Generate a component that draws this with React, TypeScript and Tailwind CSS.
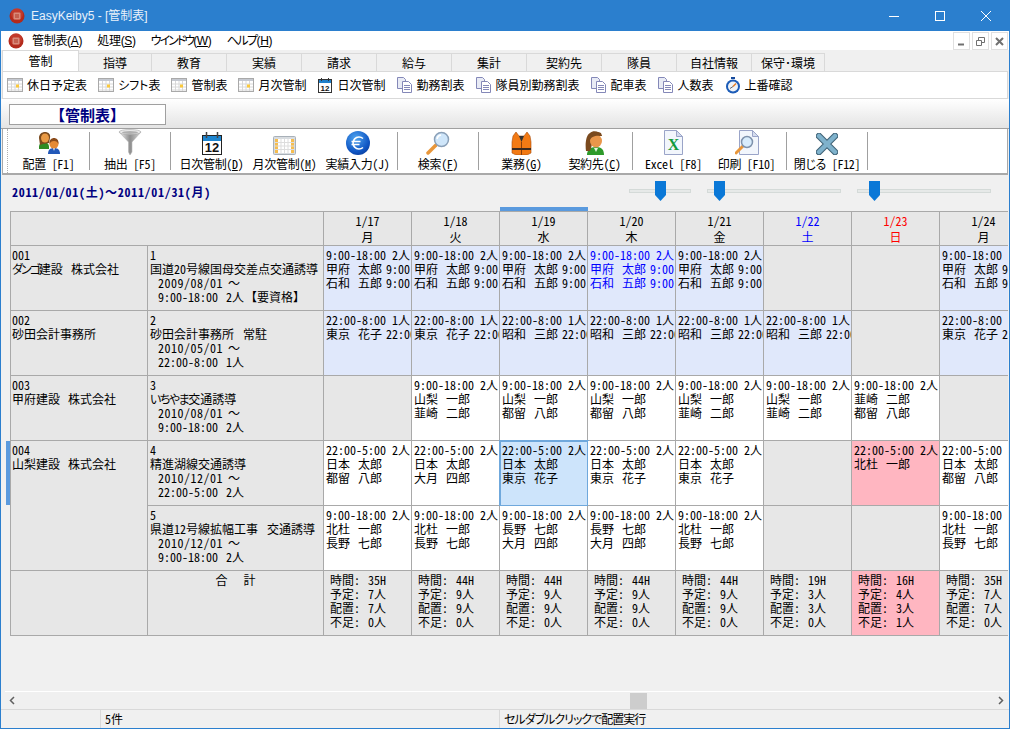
import React from "react";

type Cell = {
  time?: string;
  names?: string[];
  suffix?: string;
  tone?: "blue" | "white" | "pink" | "selected";
  blueText?: boolean;
};

const DATES = [
  { d: "1/17", w: "月" },
  { d: "1/18", w: "火" },
  { d: "1/19", w: "水" },
  { d: "1/20", w: "木" },
  { d: "1/21", w: "金" },
  { d: "1/22", w: "土", color: "text-[#0000ff]" },
  { d: "1/23", w: "日", color: "text-[#ff0000]" },
  { d: "1/24", w: "月" },
];

const day = (names: string[], suffix = "") => ({ time: "9:00-18:00 2人", names, suffix, tone: "white" as const });
const night = (names: string[]) => ({ time: "22:00-5:00 2人", names, tone: "white" as const });
const r1 = { time: "9:00-18:00 2人", names: ["甲府 太郎", "石和 五郎"], suffix: "9:00", tone: "blue" as const };
const r2 = (name: string) => ({ time: "22:00-8:00 1人", names: [name], suffix: "22:00", tone: "blue" as const });

const ROWS: Cell[][] = [
  [r1, r1, r1, { ...r1, blueText: true }, r1, {}, {}, r1],
  [r2("東京 花子"), r2("東京 花子"), r2("昭和 三郎"), r2("昭和 三郎"), r2("昭和 三郎"), r2("昭和 三郎"), {}, r2("東京 花子")],
  [
    {},
    day(["山梨 一郎", "韮崎 二郎"]),
    day(["山梨 一郎", "都留 八郎"]),
    day(["山梨 一郎", "都留 八郎"]),
    day(["山梨 一郎", "韮崎 二郎"]),
    day(["山梨 一郎", "韮崎 二郎"]),
    day(["韮崎 二郎", "都留 八郎"]),
    {},
  ],
  [
    night(["日本 太郎", "都留 八郎"]),
    night(["日本 太郎", "大月 四郎"]),
    { ...night(["日本 太郎", "東京 花子"]), tone: "selected" },
    night(["日本 太郎", "東京 花子"]),
    night(["日本 太郎", "東京 花子"]),
    {},
    { ...night(["北杜 一郎"]), tone: "pink" },
    night(["日本 太郎", "都留 八郎"]),
  ],
  [
    day(["北杜 一郎", "長野 七郎"]),
    day(["北杜 一郎", "長野 七郎"]),
    day(["長野 七郎", "大月 四郎"]),
    day(["長野 七郎", "大月 四郎"]),
    day(["北杜 一郎", "長野 七郎"]),
    {},
    {},
    day(["北杜 一郎", "長野 七郎"]),
  ],
];

const TOTALS = [
  ["35H", "7人", "7人", "0人"],
  ["44H", "9人", "9人", "0人"],
  ["44H", "9人", "9人", "0人"],
  ["44H", "9人", "9人", "0人"],
  ["44H", "9人", "9人", "0人"],
  ["19H", "3人", "3人", "0人"],
  ["16H", "4人", "3人", "1人"],
  ["35H", "7人", "7人", "0人"],
];

const TABS = ["指導", "教育", "実績", "請求", "給与", "集計", "契約先", "隊員", "自社情報", "保守･環境"];

// kana runs are narrower in the original UI font
function Kana({ children, className = "" }: { children: React.ReactNode; className?: string }) {
  return <span className={`[font-feature-settings:'palt'] ${className}`}>{children}</span>;
}

function AppIcon() {
  return (
    <svg width="16" height="16" viewBox="0 0 16 16">
      <circle cx="8" cy="8" r="7.5" fill="#b32a1c" />
      <circle cx="8" cy="6" r="6" fill="#d24a3a" opacity="0.5" />
      <rect x="4.5" y="4.5" width="7" height="7" rx="1" fill="#d98a7a" />
      <rect x="6" y="6" width="4" height="4" fill="#c4604f" />
    </svg>
  );
}

function GridIcon() {
  return (
    <svg width="16" height="14" viewBox="0 0 16 14">
      <rect x="0.5" y="0.5" width="15" height="13" fill="#fff" stroke="#a9a9a9" />
      <rect x="1" y="1" width="14" height="2" fill="#c4c8d0" />
      <path d="M1 6h14M1 9h14M1 12h14M4.5 3v10M8 3v10M11.5 3v10" stroke="#d8d8d8" />
      <rect x="9" y="6.5" width="3" height="3" fill="#fbc93a" />
    </svg>
  );
}

function SmallCalendar() {
  return (
    <svg width="14" height="16" viewBox="0 0 14 16">
      <rect x="0.5" y="2.5" width="13" height="13" fill="#fff" stroke="#333" />
      <rect x="1" y="3" width="12" height="3" fill="#1f7fc9" />
      <path d="M3.5 1v3M10.5 1v3" stroke="#333" />
      <text x="7" y="14" fontSize="8" fontWeight="700" textAnchor="middle" fill="#111" fontFamily="Liberation Sans">12</text>
    </svg>
  );
}

function DocsIcon() {
  return (
    <svg width="15" height="16" viewBox="0 0 15 16">
      <path d="M0.5 0.5h6l2 2v9h-8z" fill="#e8ebf5" stroke="#8488b8" />
      <path d="M5.5 4.5h6l3 3v8h-9z" fill="#fff" stroke="#8488b8" />
      <path d="M7 8.5h6M7 10.5h6M7 12.5h6" stroke="#8488b8" />
    </svg>
  );
}

function WatchIcon() {
  return (
    <svg width="16" height="17" viewBox="0 0 16 17">
      <rect x="6" y="0" width="4" height="2" fill="#164a9c" />
      <circle cx="8" cy="9.5" r="7" fill="#1c5cb8" />
      <circle cx="8" cy="9.5" r="5" fill="#eef2f6" />
      <path d="M8 9.5l3-3" stroke="#e57a20" strokeWidth="1.4" />
      <path d="M8 9.5l-3 2" stroke="#666" />
    </svg>
  );
}

function PeopleIcon() {
  return (
    <svg width="24" height="24" viewBox="0 0 24 24">
      <path d="M2 16c0-3 2-5 5-5s5 2 5 5v2H2z" fill="#2e8b24" />
      <path d="M2 7c0-4 3-6 6-6s6 2 5 6l-1 5-6 1-3 1z" fill="#7a4a1e" />
      <ellipse cx="8" cy="7" rx="4" ry="4.5" fill="#e99a45" />
      <path d="M11 23c0-4 2-6 6-6s6 2 6 6z" fill="#2258b8" />
      <path d="M16 17l1 3 1-3z" fill="#fff" />
      <circle cx="17" cy="13" r="4.5" fill="#e58a35" />
      <path d="M12.5 13c-.5-4 2-6 4.5-6s5 2 4.5 6c-1-2-2-3-4.5-3s-3.5 1-4.5 3z" fill="#8a4a1a" />
    </svg>
  );
}

function FunnelIcon() {
  return (
    <svg width="24" height="26" viewBox="0 0 24 26">
      <defs>
        <linearGradient id="fn" x1="0" x2="1">
          <stop offset="0" stopColor="#f4f4f4" />
          <stop offset="0.5" stopColor="#8f8f8f" />
          <stop offset="1" stopColor="#d8d8d8" />
        </linearGradient>
      </defs>
      <path d="M1 3h22l-9 10v10l-2 3-1.500-3V13z" fill="url(#fn)" stroke="#aaa" strokeWidth="0.5" />
      <ellipse cx="12" cy="3" rx="11" ry="2.500" fill="#e9e9e9" stroke="#999" strokeWidth="0.5" />
      <ellipse cx="12" cy="3.500" rx="8" ry="1.500" fill="#b0b0b0" />
    </svg>
  );
}

function BigCalendar() {
  return (
    <svg width="20" height="23" viewBox="0 0 20 23">
      <rect x="0.5" y="3.5" width="19" height="19" fill="#fff" stroke="#222" />
      <rect x="1" y="4" width="18" height="5" fill="#1d85cf" />
      <path d="M4.5 0v6M15.5 0v6" stroke="#444" strokeWidth="1.5" />
      <text x="10" y="20" fontSize="13" fontWeight="700" textAnchor="middle" fill="#111" fontFamily="Liberation Sans">12</text>
    </svg>
  );
}

function MonthIcon() {
  return (
    <svg width="23" height="19" viewBox="0 0 23 19">
      <rect x="0.5" y="0.5" width="22" height="18" rx="1" fill="#d8dce0" stroke="#a8b0b8" />
      <rect x="2" y="3" width="19" height="14" fill="#fff" />
      <rect x="2" y="3" width="3" height="14" fill="#f6bd4f" />
      <rect x="18" y="3" width="3" height="14" fill="#f6bd4f" />
      <path d="M2 6.500h19M2 10h19M2 13.500h19M8 3v14M11.500 3v14M15 3v14" stroke="#ddd" />
    </svg>
  );
}

function EuroIcon() {
  return (
    <svg width="24" height="24" viewBox="0 0 24 24">
      <defs>
        <radialGradient id="eu" cx="0.4" cy="0.3" r="0.8">
          <stop offset="0" stopColor="#4fa4ef" />
          <stop offset="0.7" stopColor="#0f56c4" />
          <stop offset="1" stopColor="#0a3a96" />
        </radialGradient>
      </defs>
      <circle cx="12" cy="12" r="12" fill="url(#eu)" />
      <path d="M17 7.500a6 6 0 1 0 0 9M5.500 10.500h9M5.500 13.500h8" fill="none" stroke="#fff" strokeWidth="1.6" />
    </svg>
  );
}

function LensIcon() {
  return (
    <svg width="24" height="24" viewBox="0 0 24 24">
      <path d="M10 14L2 22" stroke="#e8963a" strokeWidth="3.5" strokeLinecap="round" />
      <circle cx="15.5" cy="8.500" r="7" fill="#cfe6fa" stroke="#8aa0b8" strokeWidth="1.5" />
      <path d="M11 8a5 5 0 0 1 4-4" stroke="#fff" strokeWidth="1.5" fill="none" />
    </svg>
  );
}

function VestIcon() {
  return (
    <svg width="21" height="23" viewBox="0 0 21 23">
      <path d="M5 0l3 4h5l3-4 3 4 1 6v11l-4 2H5l-4-2V10l1-6z" fill="#f27a14" stroke="#a64a0a" strokeWidth="0.6" />
      <path d="M8 4l2.500 6L13 4z" fill="#333" />
      <path d="M10.500 10v13" stroke="#8a3f08" />
      <rect x="1" y="16" width="19" height="2" fill="#3a2a20" />
    </svg>
  );
}

function WomanIcon() {
  return (
    <svg width="20" height="24" viewBox="0 0 20 24">
      <path d="M2 24c0-5 3-8 9-8s8 3 8 8z" fill="#2e9a2a" />
      <path d="M9 17l2 4 2-4z" fill="#e5f5e0" />
      <path d="M1 20C0 13 1 4 5 2c3-3 10-2 12 3-3 0-7 0-9 3-1 3-1 8-3 12z" fill="#7a4a1e" />
      <ellipse cx="11" cy="10" rx="6" ry="6.500" fill="#e9964a" />
      <path d="M5 9c1-3 5-5 12-4l-1-3c-3-2-9-1-11 2z" fill="#7a4a1e" />
    </svg>
  );
}

function ExcelIcon() {
  return (
    <svg width="19" height="25" viewBox="0 0 19 25">
      <path d="M0.5 0.5h12l6 6v18h-18z" fill="#f2f6fc" stroke="#9aa4c8" />
      <path d="M12.500 0.5v6h6z" fill="#d4dcee" stroke="#9aa4c8" />
      <text x="9.5" y="20" fontSize="16" fontWeight="700" textAnchor="middle" fill="#129a3c" fontFamily="Liberation Serif">X</text>
    </svg>
  );
}

function PreviewIcon() {
  return (
    <svg width="24" height="25" viewBox="0 0 24 25">
      <path d="M4.500 0.5h13l6 6v18h-19z" fill="#f2f6fc" stroke="#9aa4c8" />
      <path d="M17.500 0.5v6h6z" fill="#d4dcee" stroke="#9aa4c8" />
      <path d="M8 16l-7 7" stroke="#e8963a" strokeWidth="3" strokeLinecap="round" />
      <circle cx="12" cy="12" r="5.500" fill="#d8ecfc" stroke="#7e92ac" strokeWidth="1.5" />
    </svg>
  );
}

function CloseIcon() {
  return (
    <svg width="22" height="22" viewBox="0 0 22 22">
      <path d="M3 3l16 16M19 3L3 19" stroke="#3f6276" strokeWidth="6.5" strokeLinecap="round" />
      <path d="M3 3l16 16M19 3L3 19" stroke="#7fb2cc" strokeWidth="4.5" strokeLinecap="round" />
    </svg>
  );
}

function MenuItem({ label, k }: { label: React.ReactNode; k: string }) {
  return (
    <span className="font-['Liberation_Sans','Noto_Sans_CJK_JP',sans-serif] tracking-[-0.3px] [font-feature-settings:normal]">
      {label}(<span className="underline">{k}</span>)
    </span>
  );
}

function SubItem({ icon, label }: { icon: React.ReactNode; label: React.ReactNode }) {
  return (
    <div className="flex items-center gap-[4px] whitespace-nowrap">
      <span className="flex w-[16px] justify-center">{icon}</span>
      <span>{label}</span>
    </div>
  );
}

function ToolButton({ icon, label, w = "w-[73px]" }: { icon: React.ReactNode; label: React.ReactNode; w?: string }) {
  return (
    <div className={`${w} flex flex-col items-center`}>
      <div className="flex h-[26px] items-end justify-center">{icon}</div>
      <div className="mt-[2px] whitespace-nowrap text-center leading-[14px] tracking-[-0.3px]">{label}</div>
    </div>
  );
}

function Sep() {
  return <div className="my-[3px] w-px shrink-0 bg-[#a0a0a0]" />;
}

function Slider({ w, pos, ml }: { w: string; pos: string; ml: string }) {
  return (
    <div className={`${w} ${ml} relative h-[4px] border border-[#d4dad8] bg-[#e6e9e8]`}>
      <svg className={`absolute top-[-9px] ${pos}`} width="11" height="20" viewBox="0 0 11 20">
        <path d="M0 0h11v14l-5.500 6L0 14z" fill="#0a78d7" />
      </svg>
    </div>
  );
}

function Name({ value }: { value: string }) {
  const [a, b] = value.split(" ");
  return (
    <>
      <span className="mr-[8px]">{a}</span>
      {b}
    </>
  );
}

function DataCell({ cell }: { cell: Cell }) {
  const tone =
    cell.tone === "blue"
      ? "bg-[#e0e8fb]"
      : cell.tone === "white"
        ? "bg-white"
        : cell.tone === "pink"
          ? "bg-[#ffb6c1]"
          : cell.tone === "selected"
            ? "bg-[#cde4fb] outline outline-2 -outline-offset-1 outline-[#6fa8dc]"
            : "bg-[#e7e7e7]";
  return (
    <div
      className={`overflow-hidden whitespace-nowrap border-b border-r border-[#a9a9a9] pl-[2px] pt-[2px] ${tone} ${
        cell.blueText ? "text-[#0000ff]" : ""
      }`}
    >
      {cell.time && <div>{cell.time}</div>}
      {cell.names?.map((n, i) => (
        <div key={i}>
          <Name value={n} />
          {cell.suffix && <span className="ml-[4px]">{cell.suffix}</span>}
        </div>
      ))}
    </div>
  );
}

function ClientCell({ code, name, span }: { code: string; name: React.ReactNode; span?: boolean }) {
  return (
    <div className={`whitespace-nowrap border-b border-r border-[#a9a9a9] bg-[#e7e7e7] pl-[1px] pt-[2px] ${span ? "row-span-2" : ""}`}>
      <div>{code}</div>
      <div>{name}</div>
    </div>
  );
}

function JobCell({ no, name, from, time, people, extra }: { no: string; name: React.ReactNode; from: string; time: string; people: string; extra?: string }) {
  return (
    <div className="whitespace-nowrap border-b border-r border-[#a9a9a9] bg-[#e7e7e7] pl-[2px] pt-[2px]">
      <div>{no}</div>
      <div>{name}</div>
      <div className="pl-[8px]">
        <span className="tracking-[0.5px]">{from}</span>
        <span className="ml-[5px] [font-feature-settings:normal]">～</span>
      </div>
      <div className="pl-[8px]">
        <span className="mr-[8px]">{time}</span>
        {people}
        {extra && <span className="ml-px">{extra}</span>}
      </div>
    </div>
  );
}

export default function App() {
  return (
    <div className="flex h-[729px] w-[1010px] flex-col overflow-hidden border border-[#2b7fce] bg-[#f0f0f0] font-['Noto_Sans_CJK_JP',sans-serif] text-[12px] leading-[14px] text-black [font-feature-settings:'hwid']">
      {/* Title bar */}
      <div className="flex h-[30px] shrink-0 items-center bg-[#2b7fce] pl-[8px] text-white">
        <AppIcon />
        <span className="ml-[6px] font-['Liberation_Sans','Noto_Sans_CJK_JP',sans-serif] text-[12px] text-[#e8f1fa] [font-feature-settings:normal]">EasyKeiby5 - [管制表]</span>
        <div className="ml-auto flex h-full items-center">
          <div className="flex w-[46px] justify-center">
            <svg width="10" height="10" viewBox="0 0 10 10"><path d="M0 5.500h10" stroke="#fff" /></svg>
          </div>
          <div className="flex w-[46px] justify-center">
            <svg width="10" height="10" viewBox="0 0 10 10"><rect x="0.5" y="0.5" width="9" height="9" fill="none" stroke="#fff" /></svg>
          </div>
          <div className="flex w-[46px] justify-center">
            <svg width="10" height="10" viewBox="0 0 10 10"><path d="M0 0l10 10M10 0L0 10" stroke="#fff" /></svg>
          </div>
        </div>
      </div>

      {/* Menu */}
      <div className="flex h-[19px] shrink-0 items-center bg-white pl-[7px]">
        <AppIcon />
        <div className="ml-[8px] flex gap-[15px]">
          <MenuItem label="管制表" k="A" />
          <MenuItem label="処理" k="S" />
          <MenuItem label={<Kana className="tracking-[-2px]">ウインドウ</Kana>} k="W" />
          <MenuItem label={<Kana className="tracking-[-1.5px]">ヘルプ</Kana>} k="H" />
        </div>
        <div className="ml-auto mr-[1px] flex h-full gap-[2px] pt-[1px]">
          {["_", "r", "x"].map((b) => (
            <div key={b} className="flex h-[18px] w-[17px] items-center justify-center border border-[#e0e0e0] bg-white">
              <svg width="9" height="9" viewBox="0 0 9 9">
                {b === "_" && <path d="M1 7.500h6" stroke="#707070" strokeWidth="2" />}
                {b === "r" && <path d="M0.5 3.500h5v5h-5zM2.500 3V0.5h6v5H6" fill="none" stroke="#707070" />}
                {b === "x" && <path d="M1 1l7 7M8 1L1 8" stroke="#707070" strokeWidth="2" />}
              </svg>
            </div>
          ))}
        </div>
      </div>

      {/* Tabs */}
      <div className="flex h-[21px] shrink-0 items-end pl-[1px]">
        <div className="z-10 flex h-[21px] w-[77px] items-center justify-center border-x border-t border-[#d9d9d9] bg-white">管制</div>
        {TABS.map((t, i) => (
          <div
            key={t}
            className={`flex h-[18px] items-center justify-center border-r border-t border-[#d9d9d9] bg-[#f0f0f0] ${
              i === 0 || i === TABS.length - 1 ? "w-[73px]" : "w-[75px]"
            }`}
          >
            {t}
          </div>
        ))}
      </div>

      {/* Sub toolbar */}
      <div className="mx-px flex h-[28px] shrink-0 items-center gap-[11px] border border-[#d9d9d9] bg-white pl-[4px]">
        <SubItem icon={<GridIcon />} label="休日予定表" />
        <SubItem icon={<GridIcon />} label={<Kana>シフト表</Kana>} />
        <SubItem icon={<GridIcon />} label="管制表" />
        <SubItem icon={<GridIcon />} label="月次管制" />
        <SubItem icon={<SmallCalendar />} label="日次管制" />
        <SubItem icon={<DocsIcon />} label="勤務割表" />
        <SubItem icon={<DocsIcon />} label="隊員別勤務割表" />
        <SubItem icon={<DocsIcon />} label="配車表" />
        <SubItem icon={<DocsIcon />} label="人数表" />
        <SubItem icon={<WatchIcon />} label="上番確認" />
      </div>

      {/* Screen title */}
      <div className="flex h-[30px] shrink-0 items-start border-b border-[#a0a0a0] bg-gradient-to-b from-white to-[#e4e4e4] pl-[8px] pt-[5px]">
        <div className="flex h-[21px] w-[157px] items-center justify-center border border-[#a0a0a0] bg-white text-[15px] font-bold text-[#000080]">
          【管制表】
        </div>
      </div>

      {/* Main toolbar */}
      <div className="mx-px flex h-[46px] shrink-0 border border-t-0 border-b-2 border-[#a9a9a9] bg-white">
        <div className="w-[1px]" />
        <div className="ml-[3px] w-[1px] border-l border-dotted border-[#b0b0b0]" />
        <ToolButton icon={<PeopleIcon />} label="配置 [F1]" w="w-[81px]" />
        <Sep />
        <ToolButton icon={<FunnelIcon />} label="抽出 [F5]" w="w-[80px]" />
        <Sep />
        <div className="flex w-[226px] pl-[4px]">
          <ToolButton icon={<BigCalendar />} label={<>日次管制(<span className="underline">D</span>)</>} />
          <ToolButton icon={<MonthIcon />} label={<>月次管制(<span className="underline">M</span>)</>} />
          <ToolButton icon={<EuroIcon />} label="実績入力(J)" />
        </div>
        <Sep />
        <ToolButton icon={<LensIcon />} label={<>検索(<span className="underline">F</span>)</>} w="w-[80px]" />
        <Sep />
        <div className="flex w-[153px] pl-[6px]">
          <ToolButton icon={<VestIcon />} label={<>業務(<span className="underline">G</span>)</>} />
          <ToolButton icon={<WomanIcon />} label={<>契約先(<span className="underline">C</span>)</>} />
        </div>
        <Sep />
        <div className="flex w-[153px] pl-[4px]">
          <ToolButton icon={<ExcelIcon />} label="Excel [F8]" />
          <ToolButton icon={<PreviewIcon />} label="印刷 [F10]" />
        </div>
        <Sep />
        <ToolButton icon={<CloseIcon />} label={<><Kana>閉じる</Kana> [F12]</>} w="w-[80px]" />
        <Sep />
      </div>

      {/* Date range + sliders */}
      <div className="flex h-[36px] shrink-0 items-center pb-[2px] pl-[11px]">
        <span className="font-bold tracking-[0.7px] text-[#000080]">
          2011/01/01(土)<span className="[font-feature-settings:normal]">～</span>2011/01/31(月)
        </span>
        <div className="ml-auto flex items-center pb-[3px] pr-[18px]">
          <Slider w="w-[62px]" pos="left-[25px]" ml="" />
          <Slider w="w-[134px]" pos="left-[6px]" ml="ml-[16px]" />
          <Slider w="w-[134px]" pos="left-[11px]" ml="ml-[16px]" />
        </div>
      </div>

      {/* Schedule grid */}
      <div className="relative ml-[5px] mr-px h-[425px] shrink-0 pl-[4px]">
        <div className="absolute left-0 top-[230px] h-[64px] w-[4px] bg-[#5a9ade]" />
        <div className="h-full overflow-hidden">
          <div className="grid w-[1018px] grid-cols-[137px_176px_repeat(8,88px)] grid-rows-[34px_65px_65px_65px_65px_65px_66px] border-l border-t border-[#a9a9a9]">
            <div className="col-span-2 border-b border-r border-[#a9a9a9] bg-[#e7e7e7]" />
            {DATES.map((x) => (
              <div key={x.d} className={`flex flex-col items-center border-b border-r border-[#a9a9a9] bg-[#e7e7e7] pt-px leading-[16px] ${x.color ?? ""}`}>
                <div>{x.d}</div>
                <div>{x.w}</div>
              </div>
            ))}

            <ClientCell code="001" name={<><span className="mr-[8px]"><Kana className="tracking-[-2px]">ダンゴ</Kana>建設</span>株式会社</>} />
            <JobCell no="1" name="国道20号線国母交差点交通誘導" from="2009/08/01" time="9:00-18:00" people="2人" extra="【要資格】" />
            {ROWS[0].map((c, i) => <DataCell key={i} cell={c} />)}

            <ClientCell code="002" name="砂田会計事務所" />
            <JobCell no="2" name={<><span className="mr-[9px]">砂田会計事務所</span>常駐</>} from="2010/05/01" time="22:00-8:00" people="1人" />
            {ROWS[1].map((c, i) => <DataCell key={i} cell={c} />)}

            <ClientCell code="003" name={<><span className="mr-[8px]">甲府建設</span>株式会社</>} />
            <JobCell no="3" name={<><Kana className="tracking-[-1.5px]">いちやま</Kana>交通誘導</>} from="2010/08/01" time="9:00-18:00" people="2人" />
            {ROWS[2].map((c, i) => <DataCell key={i} cell={c} />)}

            <ClientCell code="004" name={<><span className="mr-[8px]">山梨建設</span>株式会社</>} span />
            <JobCell no="4" name="精進湖線交通誘導" from="2010/12/01" time="22:00-5:00" people="2人" />
            {ROWS[3].map((c, i) => <DataCell key={i} cell={c} />)}

            <JobCell no="5" name={<><span className="mr-[9px]">県道12号線拡幅工事</span>交通誘導</>} from="2010/12/01" time="9:00-18:00" people="2人" />
            {ROWS[4].map((c, i) => <DataCell key={i} cell={c} />)}

            <div className="border-b-2 border-r border-[#a9a9a9] bg-[#e7e7e7]" />
            <div className="border-b-2 border-r border-[#a9a9a9] bg-[#e7e7e7] pt-[2px] text-center">
              <span className="mr-[16px]">合</span>計
            </div>
            {TOTALS.map((t, i) => (
              <div key={i} className={`border-b-2 border-r border-[#a9a9a9] pl-[6px] pt-[2px] ${i === 6 ? "bg-[#ffb6c1]" : "bg-[#e7e7e7]"}`}>
                {["時間:", "予定:", "配置:", "不足:"].map((label, j) => (
                  <div key={label} className="flex">
                    <span className="w-[38px]">{label}</span>
                    <span>{t[j]}</span>
                  </div>
                ))}
              </div>
            ))}
          </div>
        </div>
        <div className="absolute left-[494px] top-[-4px] h-[4px] w-[88px] bg-[#5a9ade]" />
      </div>

      {/* Spacer, scrollbar, status */}
      <div className="flex-1" />
      <div className="ml-[4px] mr-px flex h-[18px] shrink-0 items-center border-t border-white px-[4px]">
        <svg width="6" height="9" viewBox="0 0 6 9"><path d="M5 1L1.500 4.500 5 8" fill="none" stroke="#606060" strokeWidth="1.5" /></svg>
        <div className="ml-[615px] h-[16px] w-[17px] bg-[#cdcdcd]" />
        <svg className="ml-auto" width="6" height="9" viewBox="0 0 6 9"><path d="M1 1l3.500 3.500L1 8" fill="none" stroke="#606060" strokeWidth="1.5" /></svg>
      </div>
      <div className="flex h-[19px] shrink-0 items-center border-t border-[#d9d9d9]">
        <div className="h-full w-[100px] border-r border-[#d9d9d9]" />
        <div className="h-full w-[399px] border-r border-[#d9d9d9] pl-[4px] leading-[18px]">5件</div>
        <div className="pl-[4px] leading-[18px] tracking-[-1px]">
          <Kana>セルダブルクリックで</Kana>配置実行
        </div>
      </div>
    </div>
  );
}
